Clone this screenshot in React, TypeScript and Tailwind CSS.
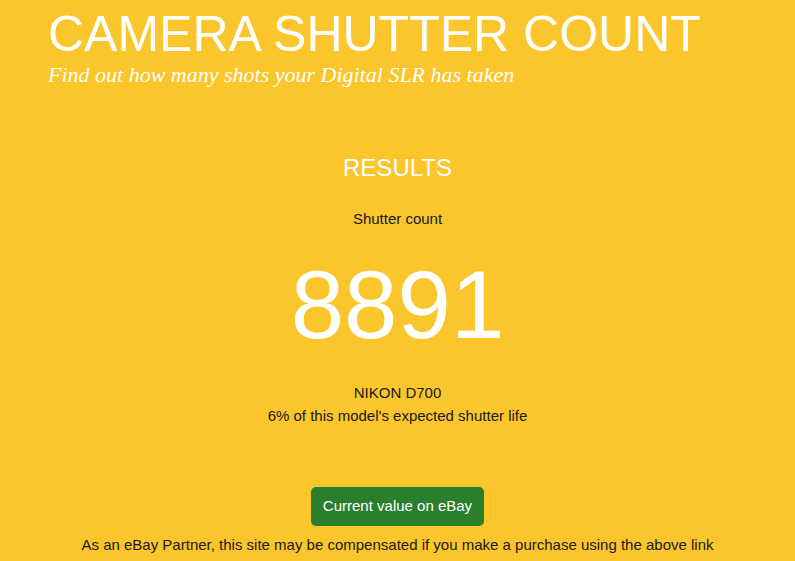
import React from "react";

export default function App() {
  return (
    <div className="min-h-[561px] w-full bg-[#fbc52c] font-['Liberation_Sans',Arial,sans-serif] text-[#1a1a1a]">
      <header className="px-[48px] pt-[6px]">
        <h1 className="text-[50px] leading-[56px] text-white">CAMERA SHUTTER COUNT</h1>
        <p className="font-['Liberation_Serif',Georgia,serif] text-[22px] italic leading-[25px] text-white">
          Find out how many shots your Digital SLR has taken
        </p>
      </header>
      <main className="flex flex-col items-center text-center">
        <h2 className="mt-[67px] text-[24px] leading-[28px] text-white">RESULTS</h2>
        <p className="mt-[28px] text-[15px] leading-[18px]">Shutter count</p>
        <p className="mt-[22px] text-[96px] leading-[110px] text-white">8891</p>
        <p className="mt-[24px] text-[15px] leading-[18px]">NIKON D700</p>
        <p className="mt-[5px] text-[15px] leading-[18px]">6% of this model's expected shutter life</p>
        <button className="mt-[62px] h-[39px] rounded-[5px] bg-[#2a7f2c] px-[12px] text-[15px] text-white">
          Current value on eBay
        </button>
        <p className="mt-[10px] text-[15px] leading-[18px]">
          As an eBay Partner, this site may be compensated if you make a purchase using the above link
        </p>
      </main>
    </div>
  );
}
